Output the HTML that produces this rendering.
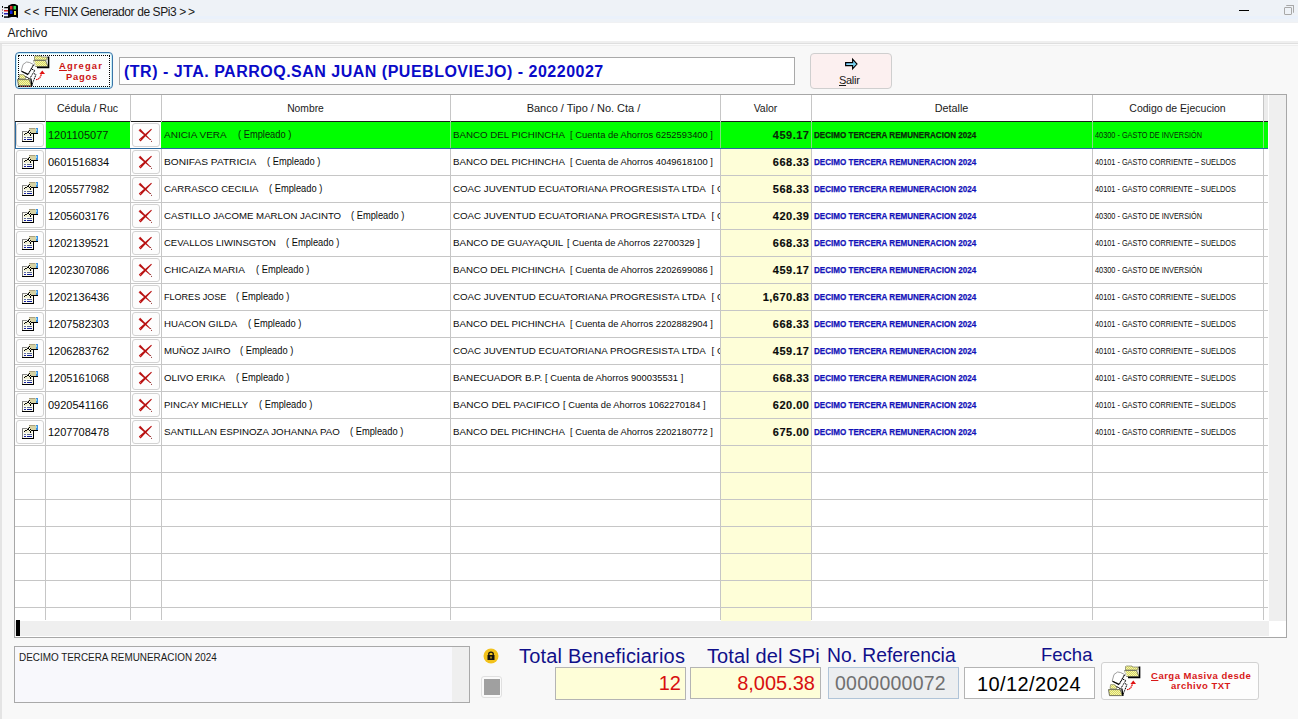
<!DOCTYPE html>
<html><head><meta charset="utf-8">
<style>
*{box-sizing:border-box}
html,body{margin:0;padding:0}
body{width:1298px;height:719px;overflow:hidden;position:relative;background:#f8f8f8;font-family:"Liberation Sans",sans-serif;color:#000}
.a{position:absolute}
.t{position:absolute;white-space:pre;line-height:1}
.hl{position:absolute;height:1px;background:#c6c6c6}
.vl{position:absolute;width:1px;background:#c6c6c6}
.btn{position:absolute;border:1px solid #d2d2d2;border-radius:3px;background:#fdfdfd}
</style></head><body>

<div class="a" style="left:0;top:0;width:1298px;height:23px;background:#eef2f7"></div>
<div class="a" style="left:0;top:16px;width:1298px;height:3px;background:#eaf1fb"></div>
<div class="a" style="left:0;top:22px;width:1298px;height:1px;background:#f0f1f3"></div>
<svg class="a" style="left:0px;top:2px" width="22" height="19" viewBox="0 0 22 19">
<rect x="2" y="4" width="1" height="1.8" fill="#000"/><rect x="2" y="7.3" width="1" height="1.3" fill="#a04848"/><rect x="2" y="10.3" width="1" height="1.3" fill="#2030a0"/><rect x="2" y="13" width="1" height="1.8" fill="#000"/>
<path d="M4 5.5 L5 5 L8 5 L8 6.3 L4 6.3 Z" fill="#000"/><rect x="4" y="8" width="4" height="1.5" fill="#d02020"/><rect x="4" y="11" width="4" height="1.5" fill="#2020b0"/><path d="M4 14.3 L8 14.3 L8 15.8 L4 15.8 Z" fill="#000"/>
<path d="M8 3.8 L10.5 2.6 L12 2 L15 2 L18 3.5 L18 16 L16 15 L11.5 15 L8 16 Z" fill="#000"/>
<rect x="10" y="4" width="2.5" height="3.5" fill="#e02828"/><rect x="13.5" y="4" width="2.5" height="3.5" fill="#30d850"/><rect x="10" y="8.5" width="2.5" height="3.5" fill="#1424e0"/><rect x="14" y="9" width="2" height="4" fill="#f0e040"/>
</svg>
<div class="t" style="left:24px;top:6px;font-size:12px;letter-spacing:-0.4px;color:#1a1a1a"><span style="letter-spacing:1.6px">&lt;&lt;</span> FENIX Generador de SPi3 <span style="letter-spacing:1.6px">&gt;</span>&gt;</div>
<div class="a" style="left:1239px;top:10px;width:10px;height:1px;background:#000"></div>
<div class="a" style="left:1284px;top:7px;width:8px;height:8px;border:1px solid #a8a8a8;border-radius:1px"></div>
<div class="a" style="left:1286px;top:5px;width:8px;height:8px;border-top:1px solid #a8a8a8;border-right:1px solid #a8a8a8;border-radius:1px"></div>
<div class="a" style="left:0;top:23px;width:1298px;height:18px;background:#ffffff"></div>
<div class="t" style="left:7.5px;top:27px;font-size:12px;color:#1a1a1a">Archivo</div>
<div class="a" style="left:0;top:41px;width:1298px;height:2px;background:#efefef"></div>
<div class="a" style="left:0;top:43px;width:1298px;height:1px;background:#dfdfdf"></div>
<div class="a" style="left:0;top:44px;width:1298px;height:1px;background:#fbfbfb"></div>
<div class="a" style="left:0;top:45px;width:1298px;height:1px;background:#eeeeee"></div>
<div class="a" style="left:0;top:44px;width:2px;height:675px;background:#e4e4e4"></div>
<div class="a" style="left:15px;top:52px;width:98px;height:37px;border:1px solid #3a74a8;border-radius:4px;background:#fbfdfe;box-shadow:inset 0 0 0 1px #c4eef8"></div>
<div class="a" style="left:18px;top:55px;width:92px;height:32px;border:1px dotted #000"></div>
<svg class="a" style="left:16px;top:54px" width="36" height="34" viewBox="0 0 36 34">
<defs><pattern id="p1" width="2" height="2" patternUnits="userSpaceOnUse"><rect width="2" height="2" fill="#f4f4b0"/><rect width="1" height="1" fill="#d8d860"/><rect x="1" y="1" width="1" height="1" fill="#d8d860"/></pattern></defs>
<path d="M18.5 6 L18.5 2.5 L19.5 2 L25 2 L25.8 3 L31 3 L31 6 Z" fill="url(#p1)" stroke="#8a8a70" stroke-width="0.8"/>
<path d="M17.5 6.5 L29.5 6.5 L32 12.5 L19.5 12.5 Z" fill="url(#p1)" stroke="#606050" stroke-width="0.8"/>
<path d="M17.8 6.8 L19.8 12.2" stroke="#fff" stroke-width="0.8"/>
<path d="M31.5 3.2 L32.6 3.2 L32.6 13.6 L21 13.6" fill="none" stroke="#000" stroke-width="1.5"/>
<path d="M5.2 17 L7 10.5 L10.5 8 L13.5 8.5 L17.5 10.5 L12.5 20 L8.5 18.5 Z" fill="#fff" stroke="#777" stroke-width="0.7"/>
<path d="M17.5 11 L12.2 20.2" stroke="#000" stroke-width="1.1" stroke-dasharray="1.2 0.6"/>
<path d="M5.5 17.3 L12.2 20.6" stroke="#000" stroke-width="1.2"/>
<path d="M16 15.3 L18.8 16.5 L13.6 24.8" fill="none" stroke="#000" stroke-width="1" stroke-dasharray="1.3 0.6"/>
<path d="M18 19.6 L20 20.6 L15.6 31.5" fill="none" stroke="#000" stroke-width="1" stroke-dasharray="1.3 0.6"/>
<path d="M7 21.5 L11.5 23.5 L13.5 25" fill="none" stroke="#000" stroke-width="1"/>
<path d="M3 24.5 L3.6 20.6 L7.6 20.6 L8.4 22 L9.5 22.8 L9.5 25 Z" fill="url(#p1)" stroke="#8a8a70" stroke-width="0.7"/>
<path d="M1.5 25.6 L13.2 25.6 L15.4 31.6 L2.5 31.6 Z" fill="url(#p1)" stroke="#505040" stroke-width="0.8"/>
<path d="M14.8 24.5 L16 31.8" stroke="#000" stroke-width="1.4"/>
<path d="M4 32.6 L15 32.6" stroke="#c03030" stroke-width="0.9" stroke-dasharray="1 1"/>
<path d="M20 25.6 Q24 25.4 25.4 20" fill="none" stroke="#e01010" stroke-width="1.3" stroke-dasharray="1.6 0.5"/>
<path d="M26.3 16.6 L23.4 20 L29 20 Z" fill="#e01010"/>
</svg>
<div class="t" style="left:59px;top:60.5px;font-size:9.4px;font-weight:bold;color:#cc1414;letter-spacing:1.15px"><u>A</u>gregar</div>
<div class="t" style="left:66px;top:71.5px;font-size:9.4px;font-weight:bold;color:#cc1414;letter-spacing:0.75px">Pagos</div>
<div class="a" style="left:119px;top:57px;width:676px;height:28px;border:1px solid #a9a9a9;background:#fff"></div>
<div class="t" style="left:124px;top:64px;font-size:16px;font-weight:bold;color:#0a0ac8;letter-spacing:0.5px">(TR) - JTA. PARROQ.SAN JUAN (PUEBLOVIEJO) - 20220027</div>
<div class="a" style="left:810px;top:53px;width:82px;height:36px;border:1px solid #cfcfcf;border-radius:4px;background:#fcf0f0"></div>
<svg class="a" style="left:841px;top:56px" width="20" height="16" viewBox="0 0 20 16">
<defs><linearGradient id="ag" x1="0" y1="0" x2="1" y2="0"><stop offset="0" stop-color="#3a8ad8"/><stop offset="1" stop-color="#8ae8fa"/></linearGradient></defs>
<path d="M4.6 6.6 L11.6 6.6 L11.6 3.2 L16 8.1 L11.6 12.8 L11.6 9.6 L4.6 9.6 Z" fill="url(#ag)" stroke="#000" stroke-width="1.1"/>
<path d="M5.5 8.2 L12 8.2" stroke="#a8f4ff" stroke-width="1"/>
</svg>
<div class="t" style="left:839px;top:75px;font-size:11px;color:#1a1a1a;letter-spacing:-0.3px"><u>S</u>alir</div>
<div class="a" style="left:14px;top:94px;width:1273px;height:544px;border:1px solid #a7a7a7;background:#ffffff"></div>
<div class="a" style="left:1263px;top:95px;width:5px;height:26px;background:#ececec"></div>
<div class="a" style="left:1269px;top:95px;width:17px;height:526px;background:#efefef"></div>
<div class="a" style="left:721px;top:122px;width:90px;height:499px;background:#fefed8"></div>
<div class="hl" style="left:15px;top:148px;width:1253px"></div>
<div class="hl" style="left:15px;top:175px;width:1253px"></div>
<div class="hl" style="left:15px;top:202px;width:1253px"></div>
<div class="hl" style="left:15px;top:229px;width:1253px"></div>
<div class="hl" style="left:15px;top:256px;width:1253px"></div>
<div class="hl" style="left:15px;top:283px;width:1253px"></div>
<div class="hl" style="left:15px;top:310px;width:1253px"></div>
<div class="hl" style="left:15px;top:337px;width:1253px"></div>
<div class="hl" style="left:15px;top:364px;width:1253px"></div>
<div class="hl" style="left:15px;top:391px;width:1253px"></div>
<div class="hl" style="left:15px;top:418px;width:1253px"></div>
<div class="hl" style="left:15px;top:445px;width:1253px"></div>
<div class="hl" style="left:15px;top:472px;width:1253px"></div>
<div class="hl" style="left:15px;top:499px;width:1253px"></div>
<div class="hl" style="left:15px;top:526px;width:1253px"></div>
<div class="hl" style="left:15px;top:553px;width:1253px"></div>
<div class="hl" style="left:15px;top:580px;width:1253px"></div>
<div class="hl" style="left:15px;top:607px;width:1253px"></div>
<div class="a" style="left:15px;top:121px;width:1253px;height:1px;background:#1a1a1a"></div>
<div class="vl" style="left:45px;top:95px;height:525px"></div>
<div class="vl" style="left:130px;top:95px;height:525px"></div>
<div class="vl" style="left:161px;top:95px;height:525px"></div>
<div class="vl" style="left:450px;top:95px;height:525px"></div>
<div class="vl" style="left:720px;top:95px;height:525px"></div>
<div class="vl" style="left:811px;top:95px;height:525px"></div>
<div class="vl" style="left:1092px;top:95px;height:525px"></div>
<div class="vl" style="left:1263px;top:95px;height:525px"></div>
<div class="t" style="left:45px;top:103px;width:85px;text-align:center;font-size:10.6px;color:#1a1a1a">Cédula / Ruc</div>
<div class="t" style="left:161px;top:104px;width:289px;text-align:center;font-size:10.3px;color:#1a1a1a">Nombre</div>
<div class="t" style="left:448.5px;top:103px;width:270px;text-align:center;font-size:11px;color:#1a1a1a">Banco / Tipo / No. Cta /</div>
<div class="t" style="left:720px;top:103px;width:91px;text-align:center;font-size:10.5px;color:#1a1a1a">Valor</div>
<div class="t" style="left:811px;top:103px;width:281px;text-align:center;font-size:10.8px;color:#1a1a1a">Detalle</div>
<div class="t" style="left:1092px;top:103px;width:171px;text-align:center;font-size:10.5px;color:#1a1a1a">Codigo de Ejecucion</div>
<div class="a" style="left:15px;top:621px;width:1254px;height:15px;background:#efefef"></div>
<div class="a" style="left:16px;top:620px;width:4px;height:16px;background:#000"></div>
<div class="a" style="left:46px;top:122px;width:1222px;height:26px;background:#00ff00"></div>
<div class="vl" style="left:45px;top:122px;height:26px;background:#e4e4ec"></div>
<div class="a" style="left:130px;top:122px;width:31px;height:26px;background:#fff"></div>
<div class="vl" style="left:1092px;top:122px;height:26px;background:#7fe07f"></div>
<div class="vl" style="left:1263px;top:122px;height:26px;background:#7fe07f"></div>
<div class="vl" style="left:450px;top:122px;height:26px;background:#7fe07f"></div>
<div class="vl" style="left:720px;top:122px;height:26px;background:#7fe07f"></div>
<div class="vl" style="left:811px;top:122px;height:26px;background:#7fe07f"></div>
<div class="a" style="left:15px;top:148px;width:1253px;height:1px;background:#2a6aa0"></div>
<div class="a" style="left:15px;top:122px;width:1px;height:27px;background:#2a6aa0"></div>
<div class="btn" style="left:16px;top:123px;width:28px;height:24px"></div>
<div class="a" style="left:20px;top:126px;line-height:0"><svg width="20" height="18" viewBox="0 0 20 18" shape-rendering="crispEdges">
<rect x="3" y="5" width="10" height="10" fill="#fbfbf2"/>
<rect x="4" y="7" width="8" height="3" fill="#eeeed2"/>
<rect x="2" y="5" width="1" height="11" fill="#7c7c7c"/>
<rect x="2" y="5" width="5" height="1" fill="#8a8a8a"/>
<rect x="2" y="15" width="12" height="1" fill="#000"/>
<rect x="13" y="8" width="1" height="8" fill="#000"/>
<rect x="4" y="11" width="2" height="1" fill="#6070a8"/><rect x="7" y="11" width="5" height="1" fill="#5a6a90"/>
<rect x="4" y="13" width="2" height="1" fill="#1820a0"/><rect x="7" y="13" width="5" height="1" fill="#1020a0"/>
<path d="M9 3 L15 2 L16 2 L16 7 L12 8 L10 6 Z" fill="#d6d2a4" shape-rendering="auto"/>
<rect x="9" y="2" width="6" height="1" fill="#a8a080"/>
<rect x="16" y="2" width="2" height="5" fill="#3a8ee0"/><rect x="16" y="3" width="1" height="2" fill="#90d8f8"/>
<rect x="12" y="7" width="6" height="1" fill="#000"/>
<rect x="4" y="8" width="1" height="1" fill="#000"/><rect x="5" y="7" width="1" height="1" fill="#000"/><rect x="6" y="7" width="1" height="1" fill="#222"/>
<rect x="7" y="6" width="1" height="1" fill="#000"/><rect x="8" y="5" width="1" height="1" fill="#000"/><rect x="9" y="4" width="1" height="1" fill="#000"/>
<rect x="8" y="6" width="1" height="1" fill="#000"/><rect x="9" y="7" width="1" height="1" fill="#000"/><rect x="10" y="8" width="1" height="1" fill="#000"/><rect x="10" y="9" width="1" height="1" fill="#000"/>
<rect x="10" y="6" width="1" height="1" fill="#000"/><rect x="11" y="7" width="1" height="1" fill="#000"/>
<rect x="8" y="4" width="1" height="1" fill="#d0d0c0"/><rect x="7" y="5" width="1" height="1" fill="#d0d0c0"/>
</svg></div>
<div class="btn" style="left:132px;top:123px;width:28px;height:24px"></div>
<div class="a" style="left:136px;top:126px;line-height:0"><svg width="20" height="18" viewBox="0 0 20 18">
<path d="M2.6 4.4 L4.2 2.8 L14.6 13.4 L14 14 Z" fill="#b81010"/>
<path d="M3.2 4.2 L4.2 3.4" stroke="#f07070" stroke-width="0.9"/>
<path d="M15.2 2.8 L15.9 3.5 L4.6 15.4 L2.8 13.6 Z" fill="#b81010"/>
<path d="M3.6 14.2 L5 13" stroke="#f06060" stroke-width="0.9"/>
<circle cx="14.6" cy="13.6" r="0.5" fill="#801010"/><circle cx="15.5" cy="15.2" r="0.55" fill="#801010"/>
</svg></div>
<div class="t" style="left:48px;top:130px;font-size:11px;color:#0a2a0a">1201105077</div>
<div class="t" style="left:164.20px;top:130px;font-size:9.5px;color:#0a2a0a;transform:scaleX(1.0518);transform-origin:0 0;">ANICIA VERA</div>
<div class="t" style="left:237.80px;top:130px;font-size:10px;color:#0a2a0a;transform:scaleX(0.9312);transform-origin:0 0;">( Empleado )</div>
<div class="t" style="left:453.10px;top:130px;font-size:9.5px;color:#0a2a0a;transform:scaleX(1.0221);transform-origin:0 0;">BANCO DEL PICHINCHA</div>
<div class="t" style="left:570.10px;top:130px;font-size:9.7px;color:#0a2a0a;transform:scaleX(0.9651);transform-origin:0 0;">[ Cuenta de Ahorros 6252593400 ]</div>
<div class="t" style="left:721px;top:130px;width:88.5px;text-align:right;font-size:11px;font-weight:bold;letter-spacing:0.5px;color:#0a2a0a;-webkit-text-stroke:0.15px #0a2a0a">459.17</div>
<div class="t" style="left:814px;top:131px;font-size:9px;font-weight:bold;color:#0a2a0a;transform:scaleX(0.895);transform-origin:0 0;-webkit-text-stroke:0.25px #0a2a0a">DECIMO TERCERA REMUNERACION 2024</div>
<div class="t" style="left:1095px;top:131px;font-size:9px;color:#0a2a0a;transform:scaleX(0.815);transform-origin:0 0">40300 - GASTO DE INVERSIÓN</div>
<div class="btn" style="left:16px;top:150px;width:28px;height:24px"></div>
<div class="a" style="left:20px;top:153px;line-height:0"><svg width="20" height="18" viewBox="0 0 20 18" shape-rendering="crispEdges">
<rect x="3" y="5" width="10" height="10" fill="#fbfbf2"/>
<rect x="4" y="7" width="8" height="3" fill="#eeeed2"/>
<rect x="2" y="5" width="1" height="11" fill="#7c7c7c"/>
<rect x="2" y="5" width="5" height="1" fill="#8a8a8a"/>
<rect x="2" y="15" width="12" height="1" fill="#000"/>
<rect x="13" y="8" width="1" height="8" fill="#000"/>
<rect x="4" y="11" width="2" height="1" fill="#6070a8"/><rect x="7" y="11" width="5" height="1" fill="#5a6a90"/>
<rect x="4" y="13" width="2" height="1" fill="#1820a0"/><rect x="7" y="13" width="5" height="1" fill="#1020a0"/>
<path d="M9 3 L15 2 L16 2 L16 7 L12 8 L10 6 Z" fill="#d6d2a4" shape-rendering="auto"/>
<rect x="9" y="2" width="6" height="1" fill="#a8a080"/>
<rect x="16" y="2" width="2" height="5" fill="#3a8ee0"/><rect x="16" y="3" width="1" height="2" fill="#90d8f8"/>
<rect x="12" y="7" width="6" height="1" fill="#000"/>
<rect x="4" y="8" width="1" height="1" fill="#000"/><rect x="5" y="7" width="1" height="1" fill="#000"/><rect x="6" y="7" width="1" height="1" fill="#222"/>
<rect x="7" y="6" width="1" height="1" fill="#000"/><rect x="8" y="5" width="1" height="1" fill="#000"/><rect x="9" y="4" width="1" height="1" fill="#000"/>
<rect x="8" y="6" width="1" height="1" fill="#000"/><rect x="9" y="7" width="1" height="1" fill="#000"/><rect x="10" y="8" width="1" height="1" fill="#000"/><rect x="10" y="9" width="1" height="1" fill="#000"/>
<rect x="10" y="6" width="1" height="1" fill="#000"/><rect x="11" y="7" width="1" height="1" fill="#000"/>
<rect x="8" y="4" width="1" height="1" fill="#d0d0c0"/><rect x="7" y="5" width="1" height="1" fill="#d0d0c0"/>
</svg></div>
<div class="btn" style="left:132px;top:150px;width:28px;height:24px"></div>
<div class="a" style="left:136px;top:153px;line-height:0"><svg width="20" height="18" viewBox="0 0 20 18">
<path d="M2.6 4.4 L4.2 2.8 L14.6 13.4 L14 14 Z" fill="#b81010"/>
<path d="M3.2 4.2 L4.2 3.4" stroke="#f07070" stroke-width="0.9"/>
<path d="M15.2 2.8 L15.9 3.5 L4.6 15.4 L2.8 13.6 Z" fill="#b81010"/>
<path d="M3.6 14.2 L5 13" stroke="#f06060" stroke-width="0.9"/>
<circle cx="14.6" cy="13.6" r="0.5" fill="#801010"/><circle cx="15.5" cy="15.2" r="0.55" fill="#801010"/>
</svg></div>
<div class="t" style="left:48px;top:157px;font-size:11px;color:#0a0a0a">0601516834</div>
<div class="t" style="left:164.20px;top:157px;font-size:9.5px;color:#0a0a0a;transform:scaleX(1.0693);transform-origin:0 0;">BONIFAS PATRICIA</div>
<div class="t" style="left:266.70px;top:157px;font-size:10px;color:#0a0a0a;transform:scaleX(0.9312);transform-origin:0 0;">( Empleado )</div>
<div class="t" style="left:453.10px;top:157px;font-size:9.5px;color:#0a0a0a;transform:scaleX(1.0221);transform-origin:0 0;">BANCO DEL PICHINCHA</div>
<div class="t" style="left:570.10px;top:157px;font-size:9.7px;color:#0a0a0a;transform:scaleX(0.9651);transform-origin:0 0;">[ Cuenta de Ahorros 4049618100 ]</div>
<div class="t" style="left:721px;top:157px;width:88.5px;text-align:right;font-size:11px;font-weight:bold;letter-spacing:0.5px;color:#0a0a0a;-webkit-text-stroke:0.15px #0a0a0a">668.33</div>
<div class="t" style="left:814px;top:158px;font-size:9px;font-weight:bold;color:#1212b8;transform:scaleX(0.895);transform-origin:0 0;-webkit-text-stroke:0.25px #1212b8">DECIMO TERCERA REMUNERACION 2024</div>
<div class="t" style="left:1095px;top:158px;font-size:9px;color:#0a0a0a;transform:scaleX(0.815);transform-origin:0 0">40101 - GASTO CORRIENTE – SUELDOS</div>
<div class="btn" style="left:16px;top:177px;width:28px;height:24px"></div>
<div class="a" style="left:20px;top:180px;line-height:0"><svg width="20" height="18" viewBox="0 0 20 18" shape-rendering="crispEdges">
<rect x="3" y="5" width="10" height="10" fill="#fbfbf2"/>
<rect x="4" y="7" width="8" height="3" fill="#eeeed2"/>
<rect x="2" y="5" width="1" height="11" fill="#7c7c7c"/>
<rect x="2" y="5" width="5" height="1" fill="#8a8a8a"/>
<rect x="2" y="15" width="12" height="1" fill="#000"/>
<rect x="13" y="8" width="1" height="8" fill="#000"/>
<rect x="4" y="11" width="2" height="1" fill="#6070a8"/><rect x="7" y="11" width="5" height="1" fill="#5a6a90"/>
<rect x="4" y="13" width="2" height="1" fill="#1820a0"/><rect x="7" y="13" width="5" height="1" fill="#1020a0"/>
<path d="M9 3 L15 2 L16 2 L16 7 L12 8 L10 6 Z" fill="#d6d2a4" shape-rendering="auto"/>
<rect x="9" y="2" width="6" height="1" fill="#a8a080"/>
<rect x="16" y="2" width="2" height="5" fill="#3a8ee0"/><rect x="16" y="3" width="1" height="2" fill="#90d8f8"/>
<rect x="12" y="7" width="6" height="1" fill="#000"/>
<rect x="4" y="8" width="1" height="1" fill="#000"/><rect x="5" y="7" width="1" height="1" fill="#000"/><rect x="6" y="7" width="1" height="1" fill="#222"/>
<rect x="7" y="6" width="1" height="1" fill="#000"/><rect x="8" y="5" width="1" height="1" fill="#000"/><rect x="9" y="4" width="1" height="1" fill="#000"/>
<rect x="8" y="6" width="1" height="1" fill="#000"/><rect x="9" y="7" width="1" height="1" fill="#000"/><rect x="10" y="8" width="1" height="1" fill="#000"/><rect x="10" y="9" width="1" height="1" fill="#000"/>
<rect x="10" y="6" width="1" height="1" fill="#000"/><rect x="11" y="7" width="1" height="1" fill="#000"/>
<rect x="8" y="4" width="1" height="1" fill="#d0d0c0"/><rect x="7" y="5" width="1" height="1" fill="#d0d0c0"/>
</svg></div>
<div class="btn" style="left:132px;top:177px;width:28px;height:24px"></div>
<div class="a" style="left:136px;top:180px;line-height:0"><svg width="20" height="18" viewBox="0 0 20 18">
<path d="M2.6 4.4 L4.2 2.8 L14.6 13.4 L14 14 Z" fill="#b81010"/>
<path d="M3.2 4.2 L4.2 3.4" stroke="#f07070" stroke-width="0.9"/>
<path d="M15.2 2.8 L15.9 3.5 L4.6 15.4 L2.8 13.6 Z" fill="#b81010"/>
<path d="M3.6 14.2 L5 13" stroke="#f06060" stroke-width="0.9"/>
<circle cx="14.6" cy="13.6" r="0.5" fill="#801010"/><circle cx="15.5" cy="15.2" r="0.55" fill="#801010"/>
</svg></div>
<div class="t" style="left:48px;top:184px;font-size:11px;color:#0a0a0a">1205577982</div>
<div class="t" style="left:164.20px;top:184px;font-size:9.5px;color:#0a0a0a;transform:scaleX(1.0117);transform-origin:0 0;">CARRASCO CECILIA</div>
<div class="t" style="left:269.00px;top:184px;font-size:10px;color:#0a0a0a;transform:scaleX(0.9312);transform-origin:0 0;">( Empleado )</div>
<div class="t" style="left:452.90px;top:184px;font-size:9.5px;color:#0a0a0a;transform:scaleX(1.0242);transform-origin:0 0;">COAC JUVENTUD ECUATORIANA PROGRESISTA LTDA</div>
<div class="a" style="left:711px;top:176px;width:9px;height:26px;overflow:hidden"><div class="t" style="left:0.5px;top:8px;font-size:9.7px;color:#0a0a0a">[ Cuenta</div></div>
<div class="t" style="left:721px;top:184px;width:88.5px;text-align:right;font-size:11px;font-weight:bold;letter-spacing:0.5px;color:#0a0a0a;-webkit-text-stroke:0.15px #0a0a0a">568.33</div>
<div class="t" style="left:814px;top:185px;font-size:9px;font-weight:bold;color:#1212b8;transform:scaleX(0.895);transform-origin:0 0;-webkit-text-stroke:0.25px #1212b8">DECIMO TERCERA REMUNERACION 2024</div>
<div class="t" style="left:1095px;top:185px;font-size:9px;color:#0a0a0a;transform:scaleX(0.815);transform-origin:0 0">40101 - GASTO CORRIENTE – SUELDOS</div>
<div class="btn" style="left:16px;top:204px;width:28px;height:24px"></div>
<div class="a" style="left:20px;top:207px;line-height:0"><svg width="20" height="18" viewBox="0 0 20 18" shape-rendering="crispEdges">
<rect x="3" y="5" width="10" height="10" fill="#fbfbf2"/>
<rect x="4" y="7" width="8" height="3" fill="#eeeed2"/>
<rect x="2" y="5" width="1" height="11" fill="#7c7c7c"/>
<rect x="2" y="5" width="5" height="1" fill="#8a8a8a"/>
<rect x="2" y="15" width="12" height="1" fill="#000"/>
<rect x="13" y="8" width="1" height="8" fill="#000"/>
<rect x="4" y="11" width="2" height="1" fill="#6070a8"/><rect x="7" y="11" width="5" height="1" fill="#5a6a90"/>
<rect x="4" y="13" width="2" height="1" fill="#1820a0"/><rect x="7" y="13" width="5" height="1" fill="#1020a0"/>
<path d="M9 3 L15 2 L16 2 L16 7 L12 8 L10 6 Z" fill="#d6d2a4" shape-rendering="auto"/>
<rect x="9" y="2" width="6" height="1" fill="#a8a080"/>
<rect x="16" y="2" width="2" height="5" fill="#3a8ee0"/><rect x="16" y="3" width="1" height="2" fill="#90d8f8"/>
<rect x="12" y="7" width="6" height="1" fill="#000"/>
<rect x="4" y="8" width="1" height="1" fill="#000"/><rect x="5" y="7" width="1" height="1" fill="#000"/><rect x="6" y="7" width="1" height="1" fill="#222"/>
<rect x="7" y="6" width="1" height="1" fill="#000"/><rect x="8" y="5" width="1" height="1" fill="#000"/><rect x="9" y="4" width="1" height="1" fill="#000"/>
<rect x="8" y="6" width="1" height="1" fill="#000"/><rect x="9" y="7" width="1" height="1" fill="#000"/><rect x="10" y="8" width="1" height="1" fill="#000"/><rect x="10" y="9" width="1" height="1" fill="#000"/>
<rect x="10" y="6" width="1" height="1" fill="#000"/><rect x="11" y="7" width="1" height="1" fill="#000"/>
<rect x="8" y="4" width="1" height="1" fill="#d0d0c0"/><rect x="7" y="5" width="1" height="1" fill="#d0d0c0"/>
</svg></div>
<div class="btn" style="left:132px;top:204px;width:28px;height:24px"></div>
<div class="a" style="left:136px;top:207px;line-height:0"><svg width="20" height="18" viewBox="0 0 20 18">
<path d="M2.6 4.4 L4.2 2.8 L14.6 13.4 L14 14 Z" fill="#b81010"/>
<path d="M3.2 4.2 L4.2 3.4" stroke="#f07070" stroke-width="0.9"/>
<path d="M15.2 2.8 L15.9 3.5 L4.6 15.4 L2.8 13.6 Z" fill="#b81010"/>
<path d="M3.6 14.2 L5 13" stroke="#f06060" stroke-width="0.9"/>
<circle cx="14.6" cy="13.6" r="0.5" fill="#801010"/><circle cx="15.5" cy="15.2" r="0.55" fill="#801010"/>
</svg></div>
<div class="t" style="left:48px;top:211px;font-size:11px;color:#0a0a0a">1205603176</div>
<div class="t" style="left:164.20px;top:211px;font-size:9.5px;color:#0a0a0a;transform:scaleX(1.0146);transform-origin:0 0;">CASTILLO JACOME MARLON JACINTO</div>
<div class="t" style="left:350.50px;top:211px;font-size:10px;color:#0a0a0a;transform:scaleX(0.9312);transform-origin:0 0;">( Empleado )</div>
<div class="t" style="left:452.90px;top:211px;font-size:9.5px;color:#0a0a0a;transform:scaleX(1.0242);transform-origin:0 0;">COAC JUVENTUD ECUATORIANA PROGRESISTA LTDA</div>
<div class="a" style="left:711px;top:203px;width:9px;height:26px;overflow:hidden"><div class="t" style="left:0.5px;top:8px;font-size:9.7px;color:#0a0a0a">[ Cuenta</div></div>
<div class="t" style="left:721px;top:211px;width:88.5px;text-align:right;font-size:11px;font-weight:bold;letter-spacing:0.5px;color:#0a0a0a;-webkit-text-stroke:0.15px #0a0a0a">420.39</div>
<div class="t" style="left:814px;top:212px;font-size:9px;font-weight:bold;color:#1212b8;transform:scaleX(0.895);transform-origin:0 0;-webkit-text-stroke:0.25px #1212b8">DECIMO TERCERA REMUNERACION 2024</div>
<div class="t" style="left:1095px;top:212px;font-size:9px;color:#0a0a0a;transform:scaleX(0.815);transform-origin:0 0">40300 - GASTO DE INVERSIÓN</div>
<div class="btn" style="left:16px;top:231px;width:28px;height:24px"></div>
<div class="a" style="left:20px;top:234px;line-height:0"><svg width="20" height="18" viewBox="0 0 20 18" shape-rendering="crispEdges">
<rect x="3" y="5" width="10" height="10" fill="#fbfbf2"/>
<rect x="4" y="7" width="8" height="3" fill="#eeeed2"/>
<rect x="2" y="5" width="1" height="11" fill="#7c7c7c"/>
<rect x="2" y="5" width="5" height="1" fill="#8a8a8a"/>
<rect x="2" y="15" width="12" height="1" fill="#000"/>
<rect x="13" y="8" width="1" height="8" fill="#000"/>
<rect x="4" y="11" width="2" height="1" fill="#6070a8"/><rect x="7" y="11" width="5" height="1" fill="#5a6a90"/>
<rect x="4" y="13" width="2" height="1" fill="#1820a0"/><rect x="7" y="13" width="5" height="1" fill="#1020a0"/>
<path d="M9 3 L15 2 L16 2 L16 7 L12 8 L10 6 Z" fill="#d6d2a4" shape-rendering="auto"/>
<rect x="9" y="2" width="6" height="1" fill="#a8a080"/>
<rect x="16" y="2" width="2" height="5" fill="#3a8ee0"/><rect x="16" y="3" width="1" height="2" fill="#90d8f8"/>
<rect x="12" y="7" width="6" height="1" fill="#000"/>
<rect x="4" y="8" width="1" height="1" fill="#000"/><rect x="5" y="7" width="1" height="1" fill="#000"/><rect x="6" y="7" width="1" height="1" fill="#222"/>
<rect x="7" y="6" width="1" height="1" fill="#000"/><rect x="8" y="5" width="1" height="1" fill="#000"/><rect x="9" y="4" width="1" height="1" fill="#000"/>
<rect x="8" y="6" width="1" height="1" fill="#000"/><rect x="9" y="7" width="1" height="1" fill="#000"/><rect x="10" y="8" width="1" height="1" fill="#000"/><rect x="10" y="9" width="1" height="1" fill="#000"/>
<rect x="10" y="6" width="1" height="1" fill="#000"/><rect x="11" y="7" width="1" height="1" fill="#000"/>
<rect x="8" y="4" width="1" height="1" fill="#d0d0c0"/><rect x="7" y="5" width="1" height="1" fill="#d0d0c0"/>
</svg></div>
<div class="btn" style="left:132px;top:231px;width:28px;height:24px"></div>
<div class="a" style="left:136px;top:234px;line-height:0"><svg width="20" height="18" viewBox="0 0 20 18">
<path d="M2.6 4.4 L4.2 2.8 L14.6 13.4 L14 14 Z" fill="#b81010"/>
<path d="M3.2 4.2 L4.2 3.4" stroke="#f07070" stroke-width="0.9"/>
<path d="M15.2 2.8 L15.9 3.5 L4.6 15.4 L2.8 13.6 Z" fill="#b81010"/>
<path d="M3.6 14.2 L5 13" stroke="#f06060" stroke-width="0.9"/>
<circle cx="14.6" cy="13.6" r="0.5" fill="#801010"/><circle cx="15.5" cy="15.2" r="0.55" fill="#801010"/>
</svg></div>
<div class="t" style="left:48px;top:238px;font-size:11px;color:#0a0a0a">1202139521</div>
<div class="t" style="left:164.20px;top:238px;font-size:9.5px;color:#0a0a0a;transform:scaleX(0.9988);transform-origin:0 0;">CEVALLOS LIWINSGTON</div>
<div class="t" style="left:285.90px;top:238px;font-size:10px;color:#0a0a0a;transform:scaleX(0.9312);transform-origin:0 0;">( Empleado )</div>
<div class="t" style="left:452.90px;top:238px;font-size:9.5px;color:#0a0a0a;transform:scaleX(1.0378);transform-origin:0 0;">BANCO DE GUAYAQUIL</div>
<div class="t" style="left:567.30px;top:238px;font-size:9.7px;color:#0a0a0a;transform:scaleX(0.9666);transform-origin:0 0;">[ Cuenta de Ahorros 22700329 ]</div>
<div class="t" style="left:721px;top:238px;width:88.5px;text-align:right;font-size:11px;font-weight:bold;letter-spacing:0.5px;color:#0a0a0a;-webkit-text-stroke:0.15px #0a0a0a">668.33</div>
<div class="t" style="left:814px;top:239px;font-size:9px;font-weight:bold;color:#1212b8;transform:scaleX(0.895);transform-origin:0 0;-webkit-text-stroke:0.25px #1212b8">DECIMO TERCERA REMUNERACION 2024</div>
<div class="t" style="left:1095px;top:239px;font-size:9px;color:#0a0a0a;transform:scaleX(0.815);transform-origin:0 0">40101 - GASTO CORRIENTE – SUELDOS</div>
<div class="btn" style="left:16px;top:258px;width:28px;height:24px"></div>
<div class="a" style="left:20px;top:261px;line-height:0"><svg width="20" height="18" viewBox="0 0 20 18" shape-rendering="crispEdges">
<rect x="3" y="5" width="10" height="10" fill="#fbfbf2"/>
<rect x="4" y="7" width="8" height="3" fill="#eeeed2"/>
<rect x="2" y="5" width="1" height="11" fill="#7c7c7c"/>
<rect x="2" y="5" width="5" height="1" fill="#8a8a8a"/>
<rect x="2" y="15" width="12" height="1" fill="#000"/>
<rect x="13" y="8" width="1" height="8" fill="#000"/>
<rect x="4" y="11" width="2" height="1" fill="#6070a8"/><rect x="7" y="11" width="5" height="1" fill="#5a6a90"/>
<rect x="4" y="13" width="2" height="1" fill="#1820a0"/><rect x="7" y="13" width="5" height="1" fill="#1020a0"/>
<path d="M9 3 L15 2 L16 2 L16 7 L12 8 L10 6 Z" fill="#d6d2a4" shape-rendering="auto"/>
<rect x="9" y="2" width="6" height="1" fill="#a8a080"/>
<rect x="16" y="2" width="2" height="5" fill="#3a8ee0"/><rect x="16" y="3" width="1" height="2" fill="#90d8f8"/>
<rect x="12" y="7" width="6" height="1" fill="#000"/>
<rect x="4" y="8" width="1" height="1" fill="#000"/><rect x="5" y="7" width="1" height="1" fill="#000"/><rect x="6" y="7" width="1" height="1" fill="#222"/>
<rect x="7" y="6" width="1" height="1" fill="#000"/><rect x="8" y="5" width="1" height="1" fill="#000"/><rect x="9" y="4" width="1" height="1" fill="#000"/>
<rect x="8" y="6" width="1" height="1" fill="#000"/><rect x="9" y="7" width="1" height="1" fill="#000"/><rect x="10" y="8" width="1" height="1" fill="#000"/><rect x="10" y="9" width="1" height="1" fill="#000"/>
<rect x="10" y="6" width="1" height="1" fill="#000"/><rect x="11" y="7" width="1" height="1" fill="#000"/>
<rect x="8" y="4" width="1" height="1" fill="#d0d0c0"/><rect x="7" y="5" width="1" height="1" fill="#d0d0c0"/>
</svg></div>
<div class="btn" style="left:132px;top:258px;width:28px;height:24px"></div>
<div class="a" style="left:136px;top:261px;line-height:0"><svg width="20" height="18" viewBox="0 0 20 18">
<path d="M2.6 4.4 L4.2 2.8 L14.6 13.4 L14 14 Z" fill="#b81010"/>
<path d="M3.2 4.2 L4.2 3.4" stroke="#f07070" stroke-width="0.9"/>
<path d="M15.2 2.8 L15.9 3.5 L4.6 15.4 L2.8 13.6 Z" fill="#b81010"/>
<path d="M3.6 14.2 L5 13" stroke="#f06060" stroke-width="0.9"/>
<circle cx="14.6" cy="13.6" r="0.5" fill="#801010"/><circle cx="15.5" cy="15.2" r="0.55" fill="#801010"/>
</svg></div>
<div class="t" style="left:48px;top:265px;font-size:11px;color:#0a0a0a">1202307086</div>
<div class="t" style="left:164.20px;top:265px;font-size:9.5px;color:#0a0a0a;transform:scaleX(1.0563);transform-origin:0 0;">CHICAIZA MARIA</div>
<div class="t" style="left:255.90px;top:265px;font-size:10px;color:#0a0a0a;transform:scaleX(0.9312);transform-origin:0 0;">( Empleado )</div>
<div class="t" style="left:453.10px;top:265px;font-size:9.5px;color:#0a0a0a;transform:scaleX(1.0221);transform-origin:0 0;">BANCO DEL PICHINCHA</div>
<div class="t" style="left:570.10px;top:265px;font-size:9.7px;color:#0a0a0a;transform:scaleX(0.9651);transform-origin:0 0;">[ Cuenta de Ahorros 2202699086 ]</div>
<div class="t" style="left:721px;top:265px;width:88.5px;text-align:right;font-size:11px;font-weight:bold;letter-spacing:0.5px;color:#0a0a0a;-webkit-text-stroke:0.15px #0a0a0a">459.17</div>
<div class="t" style="left:814px;top:266px;font-size:9px;font-weight:bold;color:#1212b8;transform:scaleX(0.895);transform-origin:0 0;-webkit-text-stroke:0.25px #1212b8">DECIMO TERCERA REMUNERACION 2024</div>
<div class="t" style="left:1095px;top:266px;font-size:9px;color:#0a0a0a;transform:scaleX(0.815);transform-origin:0 0">40300 - GASTO DE INVERSIÓN</div>
<div class="btn" style="left:16px;top:285px;width:28px;height:24px"></div>
<div class="a" style="left:20px;top:288px;line-height:0"><svg width="20" height="18" viewBox="0 0 20 18" shape-rendering="crispEdges">
<rect x="3" y="5" width="10" height="10" fill="#fbfbf2"/>
<rect x="4" y="7" width="8" height="3" fill="#eeeed2"/>
<rect x="2" y="5" width="1" height="11" fill="#7c7c7c"/>
<rect x="2" y="5" width="5" height="1" fill="#8a8a8a"/>
<rect x="2" y="15" width="12" height="1" fill="#000"/>
<rect x="13" y="8" width="1" height="8" fill="#000"/>
<rect x="4" y="11" width="2" height="1" fill="#6070a8"/><rect x="7" y="11" width="5" height="1" fill="#5a6a90"/>
<rect x="4" y="13" width="2" height="1" fill="#1820a0"/><rect x="7" y="13" width="5" height="1" fill="#1020a0"/>
<path d="M9 3 L15 2 L16 2 L16 7 L12 8 L10 6 Z" fill="#d6d2a4" shape-rendering="auto"/>
<rect x="9" y="2" width="6" height="1" fill="#a8a080"/>
<rect x="16" y="2" width="2" height="5" fill="#3a8ee0"/><rect x="16" y="3" width="1" height="2" fill="#90d8f8"/>
<rect x="12" y="7" width="6" height="1" fill="#000"/>
<rect x="4" y="8" width="1" height="1" fill="#000"/><rect x="5" y="7" width="1" height="1" fill="#000"/><rect x="6" y="7" width="1" height="1" fill="#222"/>
<rect x="7" y="6" width="1" height="1" fill="#000"/><rect x="8" y="5" width="1" height="1" fill="#000"/><rect x="9" y="4" width="1" height="1" fill="#000"/>
<rect x="8" y="6" width="1" height="1" fill="#000"/><rect x="9" y="7" width="1" height="1" fill="#000"/><rect x="10" y="8" width="1" height="1" fill="#000"/><rect x="10" y="9" width="1" height="1" fill="#000"/>
<rect x="10" y="6" width="1" height="1" fill="#000"/><rect x="11" y="7" width="1" height="1" fill="#000"/>
<rect x="8" y="4" width="1" height="1" fill="#d0d0c0"/><rect x="7" y="5" width="1" height="1" fill="#d0d0c0"/>
</svg></div>
<div class="btn" style="left:132px;top:285px;width:28px;height:24px"></div>
<div class="a" style="left:136px;top:288px;line-height:0"><svg width="20" height="18" viewBox="0 0 20 18">
<path d="M2.6 4.4 L4.2 2.8 L14.6 13.4 L14 14 Z" fill="#b81010"/>
<path d="M3.2 4.2 L4.2 3.4" stroke="#f07070" stroke-width="0.9"/>
<path d="M15.2 2.8 L15.9 3.5 L4.6 15.4 L2.8 13.6 Z" fill="#b81010"/>
<path d="M3.6 14.2 L5 13" stroke="#f06060" stroke-width="0.9"/>
<circle cx="14.6" cy="13.6" r="0.5" fill="#801010"/><circle cx="15.5" cy="15.2" r="0.55" fill="#801010"/>
</svg></div>
<div class="t" style="left:48px;top:292px;font-size:11px;color:#0a0a0a">1202136436</div>
<div class="t" style="left:164.20px;top:292px;font-size:9.5px;color:#0a0a0a;transform:scaleX(0.9520);transform-origin:0 0;">FLORES JOSE</div>
<div class="t" style="left:235.80px;top:292px;font-size:10px;color:#0a0a0a;transform:scaleX(0.9312);transform-origin:0 0;">( Empleado )</div>
<div class="t" style="left:452.90px;top:292px;font-size:9.5px;color:#0a0a0a;transform:scaleX(1.0242);transform-origin:0 0;">COAC JUVENTUD ECUATORIANA PROGRESISTA LTDA</div>
<div class="a" style="left:711px;top:284px;width:9px;height:26px;overflow:hidden"><div class="t" style="left:0.5px;top:8px;font-size:9.7px;color:#0a0a0a">[ Cuenta</div></div>
<div class="t" style="left:721px;top:292px;width:88.5px;text-align:right;font-size:11px;font-weight:bold;letter-spacing:0.5px;color:#0a0a0a;-webkit-text-stroke:0.15px #0a0a0a">1,670.83</div>
<div class="t" style="left:814px;top:293px;font-size:9px;font-weight:bold;color:#1212b8;transform:scaleX(0.895);transform-origin:0 0;-webkit-text-stroke:0.25px #1212b8">DECIMO TERCERA REMUNERACION 2024</div>
<div class="t" style="left:1095px;top:293px;font-size:9px;color:#0a0a0a;transform:scaleX(0.815);transform-origin:0 0">40101 - GASTO CORRIENTE – SUELDOS</div>
<div class="btn" style="left:16px;top:312px;width:28px;height:24px"></div>
<div class="a" style="left:20px;top:315px;line-height:0"><svg width="20" height="18" viewBox="0 0 20 18" shape-rendering="crispEdges">
<rect x="3" y="5" width="10" height="10" fill="#fbfbf2"/>
<rect x="4" y="7" width="8" height="3" fill="#eeeed2"/>
<rect x="2" y="5" width="1" height="11" fill="#7c7c7c"/>
<rect x="2" y="5" width="5" height="1" fill="#8a8a8a"/>
<rect x="2" y="15" width="12" height="1" fill="#000"/>
<rect x="13" y="8" width="1" height="8" fill="#000"/>
<rect x="4" y="11" width="2" height="1" fill="#6070a8"/><rect x="7" y="11" width="5" height="1" fill="#5a6a90"/>
<rect x="4" y="13" width="2" height="1" fill="#1820a0"/><rect x="7" y="13" width="5" height="1" fill="#1020a0"/>
<path d="M9 3 L15 2 L16 2 L16 7 L12 8 L10 6 Z" fill="#d6d2a4" shape-rendering="auto"/>
<rect x="9" y="2" width="6" height="1" fill="#a8a080"/>
<rect x="16" y="2" width="2" height="5" fill="#3a8ee0"/><rect x="16" y="3" width="1" height="2" fill="#90d8f8"/>
<rect x="12" y="7" width="6" height="1" fill="#000"/>
<rect x="4" y="8" width="1" height="1" fill="#000"/><rect x="5" y="7" width="1" height="1" fill="#000"/><rect x="6" y="7" width="1" height="1" fill="#222"/>
<rect x="7" y="6" width="1" height="1" fill="#000"/><rect x="8" y="5" width="1" height="1" fill="#000"/><rect x="9" y="4" width="1" height="1" fill="#000"/>
<rect x="8" y="6" width="1" height="1" fill="#000"/><rect x="9" y="7" width="1" height="1" fill="#000"/><rect x="10" y="8" width="1" height="1" fill="#000"/><rect x="10" y="9" width="1" height="1" fill="#000"/>
<rect x="10" y="6" width="1" height="1" fill="#000"/><rect x="11" y="7" width="1" height="1" fill="#000"/>
<rect x="8" y="4" width="1" height="1" fill="#d0d0c0"/><rect x="7" y="5" width="1" height="1" fill="#d0d0c0"/>
</svg></div>
<div class="btn" style="left:132px;top:312px;width:28px;height:24px"></div>
<div class="a" style="left:136px;top:315px;line-height:0"><svg width="20" height="18" viewBox="0 0 20 18">
<path d="M2.6 4.4 L4.2 2.8 L14.6 13.4 L14 14 Z" fill="#b81010"/>
<path d="M3.2 4.2 L4.2 3.4" stroke="#f07070" stroke-width="0.9"/>
<path d="M15.2 2.8 L15.9 3.5 L4.6 15.4 L2.8 13.6 Z" fill="#b81010"/>
<path d="M3.6 14.2 L5 13" stroke="#f06060" stroke-width="0.9"/>
<circle cx="14.6" cy="13.6" r="0.5" fill="#801010"/><circle cx="15.5" cy="15.2" r="0.55" fill="#801010"/>
</svg></div>
<div class="t" style="left:48px;top:319px;font-size:11px;color:#0a0a0a">1207582303</div>
<div class="t" style="left:164.20px;top:319px;font-size:9.5px;color:#0a0a0a;transform:scaleX(1.0126);transform-origin:0 0;">HUACON GILDA</div>
<div class="t" style="left:247.70px;top:319px;font-size:10px;color:#0a0a0a;transform:scaleX(0.9312);transform-origin:0 0;">( Empleado )</div>
<div class="t" style="left:453.10px;top:319px;font-size:9.5px;color:#0a0a0a;transform:scaleX(1.0221);transform-origin:0 0;">BANCO DEL PICHINCHA</div>
<div class="t" style="left:570.10px;top:319px;font-size:9.7px;color:#0a0a0a;transform:scaleX(0.9651);transform-origin:0 0;">[ Cuenta de Ahorros 2202882904 ]</div>
<div class="t" style="left:721px;top:319px;width:88.5px;text-align:right;font-size:11px;font-weight:bold;letter-spacing:0.5px;color:#0a0a0a;-webkit-text-stroke:0.15px #0a0a0a">668.33</div>
<div class="t" style="left:814px;top:320px;font-size:9px;font-weight:bold;color:#1212b8;transform:scaleX(0.895);transform-origin:0 0;-webkit-text-stroke:0.25px #1212b8">DECIMO TERCERA REMUNERACION 2024</div>
<div class="t" style="left:1095px;top:320px;font-size:9px;color:#0a0a0a;transform:scaleX(0.815);transform-origin:0 0">40101 - GASTO CORRIENTE – SUELDOS</div>
<div class="btn" style="left:16px;top:339px;width:28px;height:24px"></div>
<div class="a" style="left:20px;top:342px;line-height:0"><svg width="20" height="18" viewBox="0 0 20 18" shape-rendering="crispEdges">
<rect x="3" y="5" width="10" height="10" fill="#fbfbf2"/>
<rect x="4" y="7" width="8" height="3" fill="#eeeed2"/>
<rect x="2" y="5" width="1" height="11" fill="#7c7c7c"/>
<rect x="2" y="5" width="5" height="1" fill="#8a8a8a"/>
<rect x="2" y="15" width="12" height="1" fill="#000"/>
<rect x="13" y="8" width="1" height="8" fill="#000"/>
<rect x="4" y="11" width="2" height="1" fill="#6070a8"/><rect x="7" y="11" width="5" height="1" fill="#5a6a90"/>
<rect x="4" y="13" width="2" height="1" fill="#1820a0"/><rect x="7" y="13" width="5" height="1" fill="#1020a0"/>
<path d="M9 3 L15 2 L16 2 L16 7 L12 8 L10 6 Z" fill="#d6d2a4" shape-rendering="auto"/>
<rect x="9" y="2" width="6" height="1" fill="#a8a080"/>
<rect x="16" y="2" width="2" height="5" fill="#3a8ee0"/><rect x="16" y="3" width="1" height="2" fill="#90d8f8"/>
<rect x="12" y="7" width="6" height="1" fill="#000"/>
<rect x="4" y="8" width="1" height="1" fill="#000"/><rect x="5" y="7" width="1" height="1" fill="#000"/><rect x="6" y="7" width="1" height="1" fill="#222"/>
<rect x="7" y="6" width="1" height="1" fill="#000"/><rect x="8" y="5" width="1" height="1" fill="#000"/><rect x="9" y="4" width="1" height="1" fill="#000"/>
<rect x="8" y="6" width="1" height="1" fill="#000"/><rect x="9" y="7" width="1" height="1" fill="#000"/><rect x="10" y="8" width="1" height="1" fill="#000"/><rect x="10" y="9" width="1" height="1" fill="#000"/>
<rect x="10" y="6" width="1" height="1" fill="#000"/><rect x="11" y="7" width="1" height="1" fill="#000"/>
<rect x="8" y="4" width="1" height="1" fill="#d0d0c0"/><rect x="7" y="5" width="1" height="1" fill="#d0d0c0"/>
</svg></div>
<div class="btn" style="left:132px;top:339px;width:28px;height:24px"></div>
<div class="a" style="left:136px;top:342px;line-height:0"><svg width="20" height="18" viewBox="0 0 20 18">
<path d="M2.6 4.4 L4.2 2.8 L14.6 13.4 L14 14 Z" fill="#b81010"/>
<path d="M3.2 4.2 L4.2 3.4" stroke="#f07070" stroke-width="0.9"/>
<path d="M15.2 2.8 L15.9 3.5 L4.6 15.4 L2.8 13.6 Z" fill="#b81010"/>
<path d="M3.6 14.2 L5 13" stroke="#f06060" stroke-width="0.9"/>
<circle cx="14.6" cy="13.6" r="0.5" fill="#801010"/><circle cx="15.5" cy="15.2" r="0.55" fill="#801010"/>
</svg></div>
<div class="t" style="left:48px;top:346px;font-size:11px;color:#0a0a0a">1206283762</div>
<div class="t" style="left:164.20px;top:346px;font-size:9.5px;color:#0a0a0a;transform:scaleX(1.0146);transform-origin:0 0;">MUÑOZ JAIRO</div>
<div class="t" style="left:239.80px;top:346px;font-size:10px;color:#0a0a0a;transform:scaleX(0.9312);transform-origin:0 0;">( Empleado )</div>
<div class="t" style="left:452.90px;top:346px;font-size:9.5px;color:#0a0a0a;transform:scaleX(1.0242);transform-origin:0 0;">COAC JUVENTUD ECUATORIANA PROGRESISTA LTDA</div>
<div class="a" style="left:711px;top:338px;width:9px;height:26px;overflow:hidden"><div class="t" style="left:0.5px;top:8px;font-size:9.7px;color:#0a0a0a">[ Cuenta</div></div>
<div class="t" style="left:721px;top:346px;width:88.5px;text-align:right;font-size:11px;font-weight:bold;letter-spacing:0.5px;color:#0a0a0a;-webkit-text-stroke:0.15px #0a0a0a">459.17</div>
<div class="t" style="left:814px;top:347px;font-size:9px;font-weight:bold;color:#1212b8;transform:scaleX(0.895);transform-origin:0 0;-webkit-text-stroke:0.25px #1212b8">DECIMO TERCERA REMUNERACION 2024</div>
<div class="t" style="left:1095px;top:347px;font-size:9px;color:#0a0a0a;transform:scaleX(0.815);transform-origin:0 0">40101 - GASTO CORRIENTE – SUELDOS</div>
<div class="btn" style="left:16px;top:366px;width:28px;height:24px"></div>
<div class="a" style="left:20px;top:369px;line-height:0"><svg width="20" height="18" viewBox="0 0 20 18" shape-rendering="crispEdges">
<rect x="3" y="5" width="10" height="10" fill="#fbfbf2"/>
<rect x="4" y="7" width="8" height="3" fill="#eeeed2"/>
<rect x="2" y="5" width="1" height="11" fill="#7c7c7c"/>
<rect x="2" y="5" width="5" height="1" fill="#8a8a8a"/>
<rect x="2" y="15" width="12" height="1" fill="#000"/>
<rect x="13" y="8" width="1" height="8" fill="#000"/>
<rect x="4" y="11" width="2" height="1" fill="#6070a8"/><rect x="7" y="11" width="5" height="1" fill="#5a6a90"/>
<rect x="4" y="13" width="2" height="1" fill="#1820a0"/><rect x="7" y="13" width="5" height="1" fill="#1020a0"/>
<path d="M9 3 L15 2 L16 2 L16 7 L12 8 L10 6 Z" fill="#d6d2a4" shape-rendering="auto"/>
<rect x="9" y="2" width="6" height="1" fill="#a8a080"/>
<rect x="16" y="2" width="2" height="5" fill="#3a8ee0"/><rect x="16" y="3" width="1" height="2" fill="#90d8f8"/>
<rect x="12" y="7" width="6" height="1" fill="#000"/>
<rect x="4" y="8" width="1" height="1" fill="#000"/><rect x="5" y="7" width="1" height="1" fill="#000"/><rect x="6" y="7" width="1" height="1" fill="#222"/>
<rect x="7" y="6" width="1" height="1" fill="#000"/><rect x="8" y="5" width="1" height="1" fill="#000"/><rect x="9" y="4" width="1" height="1" fill="#000"/>
<rect x="8" y="6" width="1" height="1" fill="#000"/><rect x="9" y="7" width="1" height="1" fill="#000"/><rect x="10" y="8" width="1" height="1" fill="#000"/><rect x="10" y="9" width="1" height="1" fill="#000"/>
<rect x="10" y="6" width="1" height="1" fill="#000"/><rect x="11" y="7" width="1" height="1" fill="#000"/>
<rect x="8" y="4" width="1" height="1" fill="#d0d0c0"/><rect x="7" y="5" width="1" height="1" fill="#d0d0c0"/>
</svg></div>
<div class="btn" style="left:132px;top:366px;width:28px;height:24px"></div>
<div class="a" style="left:136px;top:369px;line-height:0"><svg width="20" height="18" viewBox="0 0 20 18">
<path d="M2.6 4.4 L4.2 2.8 L14.6 13.4 L14 14 Z" fill="#b81010"/>
<path d="M3.2 4.2 L4.2 3.4" stroke="#f07070" stroke-width="0.9"/>
<path d="M15.2 2.8 L15.9 3.5 L4.6 15.4 L2.8 13.6 Z" fill="#b81010"/>
<path d="M3.6 14.2 L5 13" stroke="#f06060" stroke-width="0.9"/>
<circle cx="14.6" cy="13.6" r="0.5" fill="#801010"/><circle cx="15.5" cy="15.2" r="0.55" fill="#801010"/>
</svg></div>
<div class="t" style="left:48px;top:373px;font-size:11px;color:#0a0a0a">1205161068</div>
<div class="t" style="left:164.20px;top:373px;font-size:9.5px;color:#0a0a0a;transform:scaleX(1.0189);transform-origin:0 0;">OLIVO ERIKA</div>
<div class="t" style="left:235.80px;top:373px;font-size:10px;color:#0a0a0a;transform:scaleX(0.9312);transform-origin:0 0;">( Empleado )</div>
<div class="t" style="left:452.90px;top:373px;font-size:9.5px;color:#0a0a0a;transform:scaleX(1.0319);transform-origin:0 0;">BANECUADOR B.P.</div>
<div class="t" style="left:544.60px;top:373px;font-size:9.7px;color:#0a0a0a;transform:scaleX(0.9686);transform-origin:0 0;">[ Cuenta de Ahorros 900035531 ]</div>
<div class="t" style="left:721px;top:373px;width:88.5px;text-align:right;font-size:11px;font-weight:bold;letter-spacing:0.5px;color:#0a0a0a;-webkit-text-stroke:0.15px #0a0a0a">668.33</div>
<div class="t" style="left:814px;top:374px;font-size:9px;font-weight:bold;color:#1212b8;transform:scaleX(0.895);transform-origin:0 0;-webkit-text-stroke:0.25px #1212b8">DECIMO TERCERA REMUNERACION 2024</div>
<div class="t" style="left:1095px;top:374px;font-size:9px;color:#0a0a0a;transform:scaleX(0.815);transform-origin:0 0">40101 - GASTO CORRIENTE – SUELDOS</div>
<div class="btn" style="left:16px;top:393px;width:28px;height:24px"></div>
<div class="a" style="left:20px;top:396px;line-height:0"><svg width="20" height="18" viewBox="0 0 20 18" shape-rendering="crispEdges">
<rect x="3" y="5" width="10" height="10" fill="#fbfbf2"/>
<rect x="4" y="7" width="8" height="3" fill="#eeeed2"/>
<rect x="2" y="5" width="1" height="11" fill="#7c7c7c"/>
<rect x="2" y="5" width="5" height="1" fill="#8a8a8a"/>
<rect x="2" y="15" width="12" height="1" fill="#000"/>
<rect x="13" y="8" width="1" height="8" fill="#000"/>
<rect x="4" y="11" width="2" height="1" fill="#6070a8"/><rect x="7" y="11" width="5" height="1" fill="#5a6a90"/>
<rect x="4" y="13" width="2" height="1" fill="#1820a0"/><rect x="7" y="13" width="5" height="1" fill="#1020a0"/>
<path d="M9 3 L15 2 L16 2 L16 7 L12 8 L10 6 Z" fill="#d6d2a4" shape-rendering="auto"/>
<rect x="9" y="2" width="6" height="1" fill="#a8a080"/>
<rect x="16" y="2" width="2" height="5" fill="#3a8ee0"/><rect x="16" y="3" width="1" height="2" fill="#90d8f8"/>
<rect x="12" y="7" width="6" height="1" fill="#000"/>
<rect x="4" y="8" width="1" height="1" fill="#000"/><rect x="5" y="7" width="1" height="1" fill="#000"/><rect x="6" y="7" width="1" height="1" fill="#222"/>
<rect x="7" y="6" width="1" height="1" fill="#000"/><rect x="8" y="5" width="1" height="1" fill="#000"/><rect x="9" y="4" width="1" height="1" fill="#000"/>
<rect x="8" y="6" width="1" height="1" fill="#000"/><rect x="9" y="7" width="1" height="1" fill="#000"/><rect x="10" y="8" width="1" height="1" fill="#000"/><rect x="10" y="9" width="1" height="1" fill="#000"/>
<rect x="10" y="6" width="1" height="1" fill="#000"/><rect x="11" y="7" width="1" height="1" fill="#000"/>
<rect x="8" y="4" width="1" height="1" fill="#d0d0c0"/><rect x="7" y="5" width="1" height="1" fill="#d0d0c0"/>
</svg></div>
<div class="btn" style="left:132px;top:393px;width:28px;height:24px"></div>
<div class="a" style="left:136px;top:396px;line-height:0"><svg width="20" height="18" viewBox="0 0 20 18">
<path d="M2.6 4.4 L4.2 2.8 L14.6 13.4 L14 14 Z" fill="#b81010"/>
<path d="M3.2 4.2 L4.2 3.4" stroke="#f07070" stroke-width="0.9"/>
<path d="M15.2 2.8 L15.9 3.5 L4.6 15.4 L2.8 13.6 Z" fill="#b81010"/>
<path d="M3.6 14.2 L5 13" stroke="#f06060" stroke-width="0.9"/>
<circle cx="14.6" cy="13.6" r="0.5" fill="#801010"/><circle cx="15.5" cy="15.2" r="0.55" fill="#801010"/>
</svg></div>
<div class="t" style="left:48px;top:400px;font-size:11px;color:#0a0a0a">0920541166</div>
<div class="t" style="left:164.20px;top:400px;font-size:9.5px;color:#0a0a0a;transform:scaleX(1.0026);transform-origin:0 0;">PINCAY MICHELLY</div>
<div class="t" style="left:258.80px;top:400px;font-size:10px;color:#0a0a0a;transform:scaleX(0.9312);transform-origin:0 0;">( Empleado )</div>
<div class="t" style="left:452.90px;top:400px;font-size:9.5px;color:#0a0a0a;transform:scaleX(1.0542);transform-origin:0 0;">BANCO DEL PACIFICO</div>
<div class="t" style="left:562.90px;top:400px;font-size:9.7px;color:#0a0a0a;transform:scaleX(0.9624);transform-origin:0 0;">[ Cuenta de Ahorros 1062270184 ]</div>
<div class="t" style="left:721px;top:400px;width:88.5px;text-align:right;font-size:11px;font-weight:bold;letter-spacing:0.5px;color:#0a0a0a;-webkit-text-stroke:0.15px #0a0a0a">620.00</div>
<div class="t" style="left:814px;top:401px;font-size:9px;font-weight:bold;color:#1212b8;transform:scaleX(0.895);transform-origin:0 0;-webkit-text-stroke:0.25px #1212b8">DECIMO TERCERA REMUNERACION 2024</div>
<div class="t" style="left:1095px;top:401px;font-size:9px;color:#0a0a0a;transform:scaleX(0.815);transform-origin:0 0">40101 - GASTO CORRIENTE – SUELDOS</div>
<div class="btn" style="left:16px;top:420px;width:28px;height:24px"></div>
<div class="a" style="left:20px;top:423px;line-height:0"><svg width="20" height="18" viewBox="0 0 20 18" shape-rendering="crispEdges">
<rect x="3" y="5" width="10" height="10" fill="#fbfbf2"/>
<rect x="4" y="7" width="8" height="3" fill="#eeeed2"/>
<rect x="2" y="5" width="1" height="11" fill="#7c7c7c"/>
<rect x="2" y="5" width="5" height="1" fill="#8a8a8a"/>
<rect x="2" y="15" width="12" height="1" fill="#000"/>
<rect x="13" y="8" width="1" height="8" fill="#000"/>
<rect x="4" y="11" width="2" height="1" fill="#6070a8"/><rect x="7" y="11" width="5" height="1" fill="#5a6a90"/>
<rect x="4" y="13" width="2" height="1" fill="#1820a0"/><rect x="7" y="13" width="5" height="1" fill="#1020a0"/>
<path d="M9 3 L15 2 L16 2 L16 7 L12 8 L10 6 Z" fill="#d6d2a4" shape-rendering="auto"/>
<rect x="9" y="2" width="6" height="1" fill="#a8a080"/>
<rect x="16" y="2" width="2" height="5" fill="#3a8ee0"/><rect x="16" y="3" width="1" height="2" fill="#90d8f8"/>
<rect x="12" y="7" width="6" height="1" fill="#000"/>
<rect x="4" y="8" width="1" height="1" fill="#000"/><rect x="5" y="7" width="1" height="1" fill="#000"/><rect x="6" y="7" width="1" height="1" fill="#222"/>
<rect x="7" y="6" width="1" height="1" fill="#000"/><rect x="8" y="5" width="1" height="1" fill="#000"/><rect x="9" y="4" width="1" height="1" fill="#000"/>
<rect x="8" y="6" width="1" height="1" fill="#000"/><rect x="9" y="7" width="1" height="1" fill="#000"/><rect x="10" y="8" width="1" height="1" fill="#000"/><rect x="10" y="9" width="1" height="1" fill="#000"/>
<rect x="10" y="6" width="1" height="1" fill="#000"/><rect x="11" y="7" width="1" height="1" fill="#000"/>
<rect x="8" y="4" width="1" height="1" fill="#d0d0c0"/><rect x="7" y="5" width="1" height="1" fill="#d0d0c0"/>
</svg></div>
<div class="btn" style="left:132px;top:420px;width:28px;height:24px"></div>
<div class="a" style="left:136px;top:423px;line-height:0"><svg width="20" height="18" viewBox="0 0 20 18">
<path d="M2.6 4.4 L4.2 2.8 L14.6 13.4 L14 14 Z" fill="#b81010"/>
<path d="M3.2 4.2 L4.2 3.4" stroke="#f07070" stroke-width="0.9"/>
<path d="M15.2 2.8 L15.9 3.5 L4.6 15.4 L2.8 13.6 Z" fill="#b81010"/>
<path d="M3.6 14.2 L5 13" stroke="#f06060" stroke-width="0.9"/>
<circle cx="14.6" cy="13.6" r="0.5" fill="#801010"/><circle cx="15.5" cy="15.2" r="0.55" fill="#801010"/>
</svg></div>
<div class="t" style="left:48px;top:427px;font-size:11px;color:#0a0a0a">1207708478</div>
<div class="t" style="left:164.20px;top:427px;font-size:9.5px;color:#0a0a0a;transform:scaleX(1.0258);transform-origin:0 0;">SANTILLAN ESPINOZA JOHANNA PAO</div>
<div class="t" style="left:350.30px;top:427px;font-size:10px;color:#0a0a0a;transform:scaleX(0.9312);transform-origin:0 0;">( Empleado )</div>
<div class="t" style="left:453.10px;top:427px;font-size:9.5px;color:#0a0a0a;transform:scaleX(1.0221);transform-origin:0 0;">BANCO DEL PICHINCHA</div>
<div class="t" style="left:570.10px;top:427px;font-size:9.7px;color:#0a0a0a;transform:scaleX(0.9651);transform-origin:0 0;">[ Cuenta de Ahorros 2202180772 ]</div>
<div class="t" style="left:721px;top:427px;width:88.5px;text-align:right;font-size:11px;font-weight:bold;letter-spacing:0.5px;color:#0a0a0a;-webkit-text-stroke:0.15px #0a0a0a">675.00</div>
<div class="t" style="left:814px;top:428px;font-size:9px;font-weight:bold;color:#1212b8;transform:scaleX(0.895);transform-origin:0 0;-webkit-text-stroke:0.25px #1212b8">DECIMO TERCERA REMUNERACION 2024</div>
<div class="t" style="left:1095px;top:428px;font-size:9px;color:#0a0a0a;transform:scaleX(0.815);transform-origin:0 0">40101 - GASTO CORRIENTE – SUELDOS</div>
<div class="a" style="left:14px;top:646px;width:456px;height:57px;border:1px solid #a9a9a9;background:#f8f8fc"></div>
<div class="a" style="left:452px;top:647px;width:17px;height:55px;background:#efefef"></div>
<div class="t" style="left:19px;top:652px;font-size:11px;color:#1a1a1a;transform:scaleX(0.9);transform-origin:0 0">DECIMO TERCERA REMUNERACION 2024</div>
<svg class="a" style="left:483px;top:648px" width="16" height="16" viewBox="0 0 16 16"><circle cx="8" cy="8" r="7.5" fill="#f2c21c"/><rect x="4.5" y="7" width="7" height="5" fill="#111"/><path d="M5.8 7 L5.8 5.2 Q8 3 10.2 5.2 L10.2 7" fill="none" stroke="#111" stroke-width="1.3"/><rect x="7.4" y="8.5" width="1.2" height="2" fill="#f2c21c"/></svg>
<div class="a" style="left:481px;top:676px;width:21px;height:22px;border:1px solid #e0e0e0;border-radius:3px;background:#fafafa"></div>
<div class="a" style="left:484px;top:679px;width:16px;height:16px;background:#a0a0a0"></div>
<div class="t" style="left:519px;top:646px;font-size:20px;letter-spacing:0.2px;color:#10108a">Total Beneficiarios</div>
<div class="t" style="left:707px;top:646px;font-size:20px;letter-spacing:0.12px;color:#10108a">Total del SPi</div>
<div class="t" style="left:827px;top:646px;font-size:19.3px;color:#10108a">No. Referencia</div>
<div class="t" style="left:1041px;top:646px;font-size:18.5px;color:#10108a">Fecha</div>
<div class="a" style="left:555px;top:667px;width:131px;height:33px;border:1px solid #b4b4b4;background:#fefed8"></div>
<div class="t" style="left:556px;top:673px;width:125px;text-align:right;font-size:20px;color:#d81010">12</div>
<div class="a" style="left:690px;top:667px;width:131px;height:32px;border:1px solid #b4b4b4;background:#fefed8"></div>
<div class="t" style="left:690px;top:673px;width:125px;text-align:right;font-size:20px;color:#d81010">8,005.38</div>
<div class="a" style="left:828px;top:667px;width:131px;height:32px;border:1px solid #b0c4d8;background:#eceef0"></div>
<div class="t" style="left:835px;top:674px;font-size:19.5px;letter-spacing:0.25px;color:#707070">0000000072</div>
<div class="a" style="left:964px;top:667px;width:131px;height:32px;border:1px solid #b4b4b4;background:#fff"></div>
<div class="t" style="left:977px;top:674px;font-size:20px;letter-spacing:0.4px;color:#000">10/12/2024</div>
<div class="btn" style="left:1101px;top:662px;width:158px;height:38px"></div>
<svg class="a" style="left:1107px;top:664px" width="36" height="34" viewBox="0 0 36 34">
<defs><pattern id="p2" width="2" height="2" patternUnits="userSpaceOnUse"><rect width="2" height="2" fill="#f4f4b0"/><rect width="1" height="1" fill="#d8d860"/><rect x="1" y="1" width="1" height="1" fill="#d8d860"/></pattern></defs>
<path d="M18.5 6 L18.5 2.5 L19.5 2 L25 2 L25.8 3 L31 3 L31 6 Z" fill="url(#p2)" stroke="#8a8a70" stroke-width="0.8"/>
<path d="M17.5 6.5 L29.5 6.5 L32 12.5 L19.5 12.5 Z" fill="url(#p2)" stroke="#606050" stroke-width="0.8"/>
<path d="M17.8 6.8 L19.8 12.2" stroke="#fff" stroke-width="0.8"/>
<path d="M31.5 3.2 L32.6 3.2 L32.6 13.6 L21 13.6" fill="none" stroke="#000" stroke-width="1.5"/>
<path d="M5.2 17 L7 10.5 L10.5 8 L13.5 8.5 L17.5 10.5 L12.5 20 L8.5 18.5 Z" fill="#fff" stroke="#777" stroke-width="0.7"/>
<path d="M17.5 11 L12.2 20.2" stroke="#000" stroke-width="1.1" stroke-dasharray="1.2 0.6"/>
<path d="M5.5 17.3 L12.2 20.6" stroke="#000" stroke-width="1.2"/>
<path d="M16 15.3 L18.8 16.5 L13.6 24.8" fill="none" stroke="#000" stroke-width="1" stroke-dasharray="1.3 0.6"/>
<path d="M18 19.6 L20 20.6 L15.6 31.5" fill="none" stroke="#000" stroke-width="1" stroke-dasharray="1.3 0.6"/>
<path d="M7 21.5 L11.5 23.5 L13.5 25" fill="none" stroke="#000" stroke-width="1"/>
<path d="M3 24.5 L3.6 20.6 L7.6 20.6 L8.4 22 L9.5 22.8 L9.5 25 Z" fill="url(#p2)" stroke="#8a8a70" stroke-width="0.7"/>
<path d="M1.5 25.6 L13.2 25.6 L15.4 31.6 L2.5 31.6 Z" fill="url(#p2)" stroke="#505040" stroke-width="0.8"/>
<path d="M14.8 24.5 L16 31.8" stroke="#000" stroke-width="1.4"/>

<path d="M20 25.6 Q24 25.4 25.4 20" fill="none" stroke="#e01010" stroke-width="1.3" stroke-dasharray="1.6 0.5"/>
<path d="M26.3 16.6 L23.4 20 L29 20 Z" fill="#e01010"/>
</svg>
<div class="t" style="left:1151px;top:671px;font-size:9.5px;font-weight:bold;letter-spacing:0.5px;color:#d81818"><u>C</u>arga Masiva desde</div>
<div class="t" style="left:1171px;top:681px;font-size:9.5px;font-weight:bold;letter-spacing:0.5px;color:#d81818">archivo TXT</div>
</body></html>
